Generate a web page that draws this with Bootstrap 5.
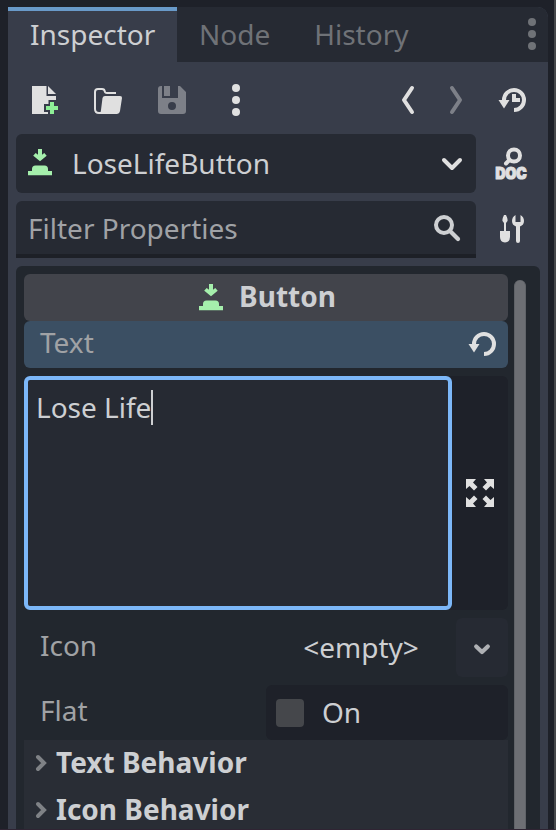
<!DOCTYPE html>
<html lang="en" data-bs-theme="dark">
<head>
<meta charset="utf-8">
<meta name="viewport" content="width=device-width, initial-scale=1">
<title>Inspector</title>
<link href="https://cdn.jsdelivr.net/npm/bootstrap@5.3.0/dist/css/bootstrap.min.css" rel="stylesheet">
<style>
body{background:#1e2129;font-family:"Noto Sans",sans-serif;font-size:28px;line-height:38px;color:#cdcfd2;height:830px}
svg{display:block;flex:none;overflow:visible}
.window{height:830px;padding:7px 6px 0 8px;border-right:2px solid #46484b;border-bottom:1px solid #2f2433}
.dock{height:822px;background:#383d4a;border-radius:0 10px 0 0}
.dock-tabs{height:55px;background:#262a33;border-radius:0 10px 0 0}
.dock-tabs .nav-link{padding:8px 22px 9px;color:#6f7277;border:0;border-radius:0;height:55px}
.dock-tabs .nav-link.active{background:#383d4a;color:#cdcfd2;border-top:4px solid #699ac9;padding-top:4px;width:169px}
.tools{height:72px;padding:4px 20px 0}
.gap-icon{margin-left:32px}
.gap-next{margin-left:28px}
.main{padding:0 8px}
.pick,.filter{width:460px;background:#262a33;border-radius:6px}
.pick{height:59px;padding:0 8px}
.pick-icon{margin-top:1px}
.pick-name{margin-left:16px;margin-bottom:2px}
.filter{height:57px;border-bottom:4px solid #1d2027;border-radius:6px 6px 0 0;padding:0 12px;color:#a0a2a6}
.side-icon{margin-left:20px}
.doc-icon{margin-left:19px}
.doc-icon text{font:900 15.5px Inter,sans-serif}
.panel{height:563px;margin-top:8px;background:#22272e;border-radius:6px 6px 0 0;padding:8px 14px 0 8px}
.props{width:484px}
.head{height:47px;background:#42444b;border-radius:6px;padding-bottom:3px}
.head svg{margin:6px 8px 0 -1px}
.prop-name{color:#a0a2a5}
.changed{height:47px;background:#3b4f63;border-radius:6px;padding:0 10px 0 16px}
.changed svg{margin-bottom:1px}
.multi{height:234px;background:#1e2129;border-radius:6px;margin-top:8px}
.entry{width:428px;background:#262a33;border:4px solid #7cb7f8;border-radius:6px;padding:8px}
.caret{width:2px;height:35px;margin-top:2px;background:#cdcfd2}
.row-icon{height:59px;margin-top:8px}
.row-flat{height:55px;margin-top:8px}
.lift{margin-bottom:5px}
.drop{width:52px;height:59px;background:#262a33;border-radius:6px;padding-top:3px}
.val{width:190px;margin-bottom:2px}
.flat-val{width:242px;height:55px;background:#1e2129;border-radius:6px;padding-left:10px}
.flat-text{margin:0 0 2px 18px}
.tick{width:28px;height:28px;border-radius:4px;background:#45474b}
.sect{height:47px;background:#292d35;padding:0 12px 3px 12px}
.thumb{width:12px;height:600px;margin-top:6px;background:#6d6f74;border-radius:6px;border:1px solid #606368;border-width:0 1px}
.i{fill:#e0e0e0}
.s{fill:none;stroke:#e0e0e0;stroke-width:4}
.thin{stroke-width:2}
.g{fill:#a5efac}
</style>
<script src="https://cdn.jsdelivr.net/npm/bootstrap@5.3.0/dist/js/bootstrap.bundle.min.js"></script>
</head>
<body class="overflow-hidden">
<svg width="0" height="0" class="position-absolute">
  <symbol id="press" viewBox="0 0 32 32"><path class="g" d="M14 1h4v8h-4zM9.300 7.500 11.700 5 16 8.300 20.300 5l2.400 2.800L16 13.200 9.300 7.800zM4 23h4v-2q0-3.500 3.500-3.500h9Q24 17.500 24 21v2h4v4.300H4z"/></symbol>
  <symbol id="revert" viewBox="0 0 32 32"><path class="s" d="M18 26A10 10 0 1 0 8 16"/><path class="i" d="M2.500 16h11L8 24.500z"/></symbol>
</svg>
<div class="window overflow-hidden">
<div class="dock overflow-hidden">
  <nav class="dock-tabs nav flex-nowrap">
    <a class="nav-link active">Inspector</a>
    <a class="nav-link">Node</a>
    <a class="nav-link">History</a>
    <svg class="ms-auto me-2 mt-2" width="16" height="40" viewBox="0 0 16 40" fill="#6f7277"><circle cx="8" cy="7" r="4"/><circle cx="8" cy="19" r="4"/><circle cx="8" cy="31" r="4"/></svg>
  </nav>

  <div class="tools d-flex align-items-center">
    <svg width="32" height="32"><path class="i" d="M4 2H18.500V12H28V16H20.500V20H16V28H20V30H4ZM20 2L28 10H20Z"/><path fill="#8eef97" d="M22 18h4v4h4v4h-4v4h-4v-4h-4v-4h4z"/></svg>
    <svg class="gap-icon" width="32" height="32"><path class="s thin" d="M9 29H7Q3 29 3 25V8Q3 5 6 5H10Q12.500 5 12.800 7.500Q13 9 15 9H24"/><path class="i" d="M13 12H28Q30.300 12 30 14L28 27Q27.400 30 24.500 30H7.500Q8.700 29 9 26L10.500 14Q11 12 13 12Z"/></svg>
    <svg class="gap-icon" width="32" height="32"><path fill="#7d8088" fill-rule="evenodd" d="M5 2H6V14H22V2H24L30 8V27Q30 30 27 30H5Q2 30 2 27V5Q2 2 5 2ZM8 2H14V12H8ZM20 22A4 4 0 1 0 12 22A4 4 0 1 0 20 22Z"/></svg>
    <svg class="gap-icon" width="32" height="32"><g class="i"><circle cx="16" cy="4" r="4"/><circle cx="16" cy="16" r="4"/><circle cx="16" cy="28" r="4"/></g></svg>
    <svg class="ms-auto" width="20" height="32"><path class="s" stroke-linecap="round" stroke-linejoin="round" d="M16 4L8 16L16 28"/></svg>
    <svg class="gap-next" width="20" height="32"><path d="M8 4L16 16L8 28" fill="none" stroke="#7d8088" stroke-width="4" stroke-linecap="round" stroke-linejoin="round"/></svg>
    <svg class="gap-icon" width="32" height="32"><use href="#revert" width="32" height="32"/><path class="i" d="M16 10h4v4h4v4h-8z"/></svg>
  </div>

  <div class="main">
    <div class="d-flex align-items-center mb-2">
      <div class="pick d-flex align-items-center">
        <svg class="pick-icon" width="32" height="32"><use href="#press" width="32" height="32"/></svg>
        <span class="pick-name">LoseLifeButton</span>
        <svg class="ms-auto" width="32" height="32"><path class="s" stroke-linecap="round" stroke-linejoin="round" d="M8 12L16 20L24 12"/></svg>
      </div>
      <svg class="doc-icon" width="32" height="32"><circle class="s" cx="19" cy="7.500" r="6"/><path class="s" stroke-linecap="round" d="M14.500 12L11 15.500"/><text x=".5" y="30.500" textLength="31" lengthAdjust="spacingAndGlyphs" fill="#e0e0e0" stroke="#e0e0e0" stroke-width="1.200">DOC</text></svg>
    </div>
    <div class="d-flex align-items-center">
      <div class="filter d-flex align-items-center">
        <span>Filter Properties</span>
        <svg class="ms-auto" width="32" height="32"><circle cx="12" cy="13" r="8" fill="none" stroke="#cdcfd2" stroke-width="4"/><path d="M18 19L26 27" fill="none" stroke="#cdcfd2" stroke-width="4.200" stroke-linecap="round"/></svg>
      </div>
      <svg class="side-icon" width="32" height="32"><path class="i" d="M8 1h2q2 4 1.500 6L10 9v8h4v6q0 5-5 5.500Q4 28 4 23v-6h4v-8L6.500 7Q6 5 8 1zM19.500 1v7h5V1Q28 3 28 7q0 4-4 5.500V27q0 2-2 2t-2-2V12.500Q16 11 16 7q0-4 3.500-6z"/></svg>
    </div>

    <div class="panel d-flex justify-content-between">
      <div class="props">
        <div class="head d-flex align-items-center justify-content-center fw-bold"><svg width="32" height="32"><use href="#press" width="32" height="32"/></svg><span class="ps-1">Button</span></div>
        <div class="changed d-flex align-items-center"><span class="prop-name lift">Text</span><svg class="ms-auto" width="32" height="32"><use href="#revert" width="32" height="32"/></svg></div>
        <div class="multi d-flex">
          <div class="entry d-flex"><span>Lose Life</span><span class="caret"></span></div>
          <div class="flex-fill d-flex align-items-center justify-content-center">
            <svg width="28" height="28" class="i"><path id="arm" d="M0 0H10L7 3.500L11.500 8L8 11.500L3.500 7L0 10Z"/><use href="#arm" transform="translate(28 0) scale(-1 1)"/><use href="#arm" transform="translate(0 28) scale(1 -1)"/><use href="#arm" transform="translate(28 28) scale(-1 -1)"/></svg>
          </div>
        </div>
        <div class="row-icon d-flex align-items-center">
          <span class="prop-name lift ps-3">Icon</span>
          <span class="val ms-auto text-center">&lt;empty&gt;</span>
          <div class="drop d-flex align-items-center justify-content-center"><svg width="16" height="12"><path d="M2.200 3.500L8 9L13.800 3.500" fill="none" stroke="#aeb0b4" stroke-width="4.200" stroke-linecap="round" stroke-linejoin="round"/></svg></div>
        </div>
        <div class="row-flat d-flex align-items-center">
          <span class="prop-name lift ps-3">Flat</span>
          <div class="flat-val ms-auto d-flex align-items-center"><span class="tick"></span><span class="flat-text">On</span></div>
        </div>
        <div class="sect d-flex align-items-center fw-bold"><svg width="12" height="16"><path d="M2 3L8 9L2 15" fill="none" stroke="#7f8286" stroke-width="4" stroke-linecap="round"/></svg><span class="ps-2">Text Behavior</span></div>
        <div class="sect d-flex align-items-center fw-bold"><svg width="12" height="16"><path d="M2 3L8 9L2 15" fill="none" stroke="#7f8286" stroke-width="4" stroke-linecap="round"/></svg><span class="ps-2">Icon Behavior</span></div>
      </div>
      <div class="thumb"></div>
    </div>
  </div>
</div>
</div>
</body>
</html>
